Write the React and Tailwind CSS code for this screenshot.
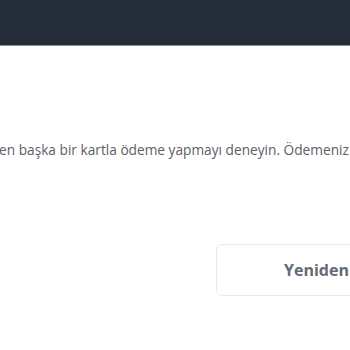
import React from 'react';

const App = () => {
  return (
    <div className="w-[350px] h-[350px] overflow-hidden bg-white" style={{ fontFamily: '"Open Sans", "Noto Sans", sans-serif' }}>
      <div className="h-[46px] bg-[#252c3a] border-b border-[#8a9098]" />
      <div className="pt-[94px] -ml-[26px] whitespace-nowrap">
        <p className="text-[13.7px] leading-5 text-[#5c6066]">
          Lütfen başka bir kartla ödeme yapmayı deneyin. Ödemeniz alınamadı.
        </p>
      </div>
      <div className="mt-[84px] flex whitespace-nowrap">
        <button className="ml-[216px] h-[52px] w-[200px] shrink-0 rounded-md border border-[#e8e9eb] bg-white pl-[67px] text-left text-[16px] font-bold text-[#646a74]">
          Yeniden Dene
        </button>
      </div>
    </div>
  );
};

export default App;
